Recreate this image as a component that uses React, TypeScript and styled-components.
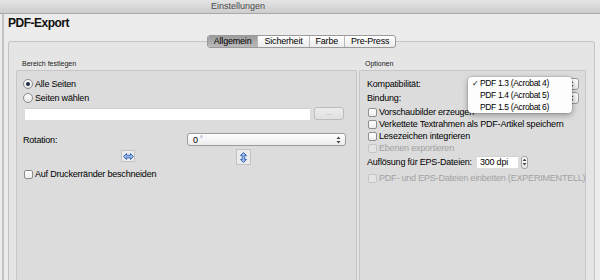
import React from 'react';
import styled, { createGlobalStyle } from 'styled-components';

const GlobalStyle = createGlobalStyle`
  html, body {
    margin: 0;
    padding: 0;
  }
  body {
    width: 600px;
    height: 280px;
    overflow: hidden;
    background: #ececec;
    font-family: "Liberation Sans", Arial, sans-serif;
    font-size: 9px;
    letter-spacing: -0.2px;
    color: #000;
  }
`;

const Window = styled.div`
  width: 600px;
  height: 280px;
  display: flex;
  flex-direction: column;
  overflow: hidden;
`;

const TitleBar = styled.div`
  height: 13px;
  flex: none;
  background: linear-gradient(#e4e4e4, #cdcdcd);
  border-bottom: 1px solid #a8a8a8;
  padding-left: 211px;
  line-height: 13px;
  color: #4a4a4a;
  letter-spacing: 0;
`;

const Body = styled.div`
  flex: 1;
  display: flex;
  flex-direction: column;
  margin-left: 2px;
  border-left: 2px solid #c3c3c3;
  padding: 2px 5px 0 4px;
  min-height: 0;
`;

const Heading = styled.h1`
  margin: 0;
  font-size: 12px;
  line-height: 14px;
  font-weight: bold;
  letter-spacing: -0.5px;
  color: #111;
`;

const TabRow = styled.div`
  display: flex;
  justify-content: center;
  margin-top: 5px;
  position: relative;
  z-index: 1;
`;

const TabGroup = styled.div`
  display: flex;
  border: 1px solid #9a9a9a;
  border-radius: 3px;
  overflow: hidden;
  background: linear-gradient(#ffffff, #ebebeb);
`;

const Tab = styled.div<{ $active?: boolean }>`
  height: 11px;
  line-height: 11px;
  padding: 0 6px;
  border-left: 1px solid ${p => (p.$active ? '#8c8c8c' : '#b8b8b8')};
  background: ${p => (p.$active ? 'linear-gradient(#9c9c9c, #bababa)' : 'transparent')};
  &:first-child {
    border-left: none;
  }
`;

const TabBox = styled.div`
  flex: 1;
  display: flex;
  gap: 2px;
  margin-top: -7px;
  border: 1px solid #c4c4c4;
  border-bottom: none;
  border-radius: 3px 3px 0 0;
  background: #e5e5e5;
  padding: 17px 8px 0 7px;
  min-height: 0;
`;

const Column = styled.div<{ $w: number }>`
  width: ${p => p.$w}px;
  display: flex;
  flex-direction: column;
`;

const GroupLabel = styled.div`
  font-size: 7px;
  line-height: 10px;
  letter-spacing: 0;
  padding-left: 6px;
  margin-bottom: 1px;
  color: #222;
`;

const Panel = styled.div<{ $pl: number }>`
  flex: 1;
  position: relative;
  background: #dcdcdc;
  border: 1px solid #c6c6c6;
  border-bottom: none;
  border-radius: 2px 2px 0 0;
  padding: 6px 0 0 ${p => p.$pl}px;
`;

const Row = styled.div<{ $h?: number; $mt?: number }>`
  display: flex;
  align-items: center;
  gap: 2px;
  height: ${p => p.$h ?? 12}px;
  margin-top: ${p => p.$mt ?? 0}px;
`;

const Label = styled.span<{ $disabled?: boolean; $w?: number }>`
  color: ${p => (p.$disabled ? '#a2a2a2' : '#000')};
  white-space: nowrap;
  ${p => (p.$w ? `width: ${p.$w}px; flex: none;` : '')}
`;

const Radio = styled.span<{ $checked?: boolean }>`
  width: 10px;
  height: 10px;
  box-sizing: border-box;
  flex: none;
  border-radius: 50%;
  border: 1px solid #8a8a8a;
  background: linear-gradient(#ffffff, #e6e6e6);
  display: flex;
  align-items: center;
  justify-content: center;
  &::after {
    content: '';
    width: 4px;
    height: 4px;
    border-radius: 50%;
    background: #1f2c46;
    display: ${p => (p.$checked ? 'block' : 'none')};
  }
`;

const CheckBox = styled.span<{ $disabled?: boolean }>`
  width: 9px;
  height: 9px;
  box-sizing: border-box;
  flex: none;
  margin-left: 1px;
  border: 1px solid ${p => (p.$disabled ? '#c6c6c6' : '#8e8e8e')};
  border-radius: 2px;
  background: ${p => (p.$disabled ? '#e4e4e4' : 'linear-gradient(#ffffff, #ececec)')};
`;

const TextField = styled.div<{ $w: number; $ml?: number }>`
  width: ${p => p.$w}px;
  height: 12px;
  flex: none;
  box-sizing: border-box;
  margin-left: ${p => p.$ml ?? 0}px;
  background: #fff;
  border-top: 1px solid #cfcfcf;
  padding-left: 3px;
  line-height: 11px;
`;

const SmallButton = styled.div`
  width: 30px;
  height: 13px;
  box-sizing: border-box;
  margin-left: 2px;
  border: 1px solid #bcbcbc;
  border-radius: 3px;
  background: linear-gradient(#ececec, #e0e0e0);
  color: #a5a5a5;
  font-size: 7px;
  line-height: 9px;
  text-align: center;
`;

const Select = styled.div<{ $w: number; $h?: number }>`
  width: ${p => p.$w}px;
  height: ${p => p.$h ?? 13}px;
  flex: none;
  box-sizing: border-box;
  display: flex;
  align-items: center;
  justify-content: space-between;
  padding: 0 4px 0 5px;
  border: 1px solid #9b9b9b;
  border-radius: 3px;
  background: linear-gradient(#ffffff, #ececec);
`;

const Degree = styled.span`
  color: #3d5f9a;
  font-size: 7px;
  vertical-align: top;
`;

const Stepper = styled.div`
  width: 7px;
  height: 13px;
  box-sizing: border-box;
  margin-left: 3px;
  border: 1px solid #a2a2a2;
  border-radius: 3px;
  background: linear-gradient(#ffffff, #e8e8e8);
  display: flex;
  align-items: center;
  justify-content: center;
`;

const FlipButton = styled.div<{ $w: number; $h: number; $ml: number; $mt?: number }>`
  width: ${p => p.$w}px;
  height: ${p => p.$h}px;
  box-sizing: border-box;
  margin-left: ${p => p.$ml}px;
  margin-top: ${p => p.$mt ?? 0}px;
  border: 1px solid #c2c2c2;
  background: #ebebeb;
  display: flex;
  align-items: center;
  justify-content: center;
`;

const Menu = styled.div`
  position: absolute;
  left: 108px;
  top: 6px;
  width: 104px;
  background: #fdfdfd;
  border-radius: 4px;
  box-shadow: 0 2px 6px rgba(0, 0, 0, 0.35), 0 0 0 0.5px rgba(0, 0, 0, 0.15);
  z-index: 2;
`;

const MenuItem = styled.div`
  display: flex;
  align-items: center;
  height: 12px;
  font-size: 8.5px;
  letter-spacing: -0.35px;
`;

const Check = styled.span`
  width: 8px;
  margin-left: 4px;
  font-size: 8px;
  flex: none;
`;

const Arrows = () => (
  <svg width="5" height="8" viewBox="0 0 5 8">
    <path d="M0.5 3 L2.5 0.5 L4.5 3 Z M0.5 5 L2.5 7.5 L4.5 5 Z" fill="#4a4a4a" />
  </svg>
);

const FlipIcon = ({ vertical }: { vertical?: boolean }) => (
  <svg width="11" height="7" viewBox="0 0 11 7" style={vertical ? { transform: 'rotate(90deg)' } : undefined}>
    <path
      d="M0.5 3.5 L3.5 0.5 L3.5 2.2 L7.5 2.2 L7.5 0.5 L10.5 3.5 L7.5 6.5 L7.5 4.8 L3.5 4.8 L3.5 6.5 Z"
      fill="#9dbbea"
      stroke="#2d5fb4"
      strokeWidth="0.9"
      strokeLinejoin="round"
    />
  </svg>
);

export default function App() {
  return (
    <>
      <GlobalStyle />
      <Window>
        <TitleBar>Einstellungen</TitleBar>
        <Body>
          <Heading>PDF-Export</Heading>
          <TabRow>
            <TabGroup>
              <Tab $active>Allgemein</Tab>
              <Tab>Sicherheit</Tab>
              <Tab>Farbe</Tab>
              <Tab>Pre-Press</Tab>
            </TabGroup>
          </TabRow>
          <TabBox>
            <Column $w={341}>
              <GroupLabel>Bereich festlegen</GroupLabel>
              <Panel $pl={6}>
                <Row $h={14}>
                  <Radio $checked />
                  <Label>Alle Seiten</Label>
                </Row>
                <Row $h={14}>
                  <Radio />
                  <Label>Seiten wählen</Label>
                </Row>
                <Row $h={13} $mt={2}>
                  <TextField $w={285} $ml={2} />
                  <SmallButton>...</SmallButton>
                </Row>
                <Row $h={13} $mt={13} style={{ gap: 0 }}>
                  <Label $w={164}>Rotation:</Label>
                  <Select $w={159}>
                    <span>
                      0 <Degree>°</Degree>
                    </span>
                    <Arrows />
                  </Select>
                </Row>
                <Row $h={16} $mt={3} style={{ alignItems: 'flex-start', gap: 0 }}>
                  <FlipButton $w={14} $h={12} $ml={98} $mt={1}>
                    <FlipIcon />
                  </FlipButton>
                  <FlipButton $w={15} $h={16} $ml={101}>
                    <FlipIcon vertical />
                  </FlipButton>
                </Row>
                <Row $h={14} $mt={2}>
                  <CheckBox />
                  <Label>Auf Druckerränder beschneiden</Label>
                </Row>
              </Panel>
            </Column>
            <Column $w={227}>
              <GroupLabel>Optionen</GroupLabel>
              <Panel $pl={7}>
                <Row $h={14} style={{ gap: 0 }}>
                  <Label $w={103}>Kompatibilität:</Label>
                  <Select $w={109} $h={12} style={{ justifyContent: 'flex-end' }}>
                    <Arrows />
                  </Select>
                </Row>
                <Row $h={14} style={{ gap: 0 }}>
                  <Label $w={103}>Bindung:</Label>
                  <Select $w={109} $h={12} style={{ justifyContent: 'flex-end' }}>
                    <Arrows />
                  </Select>
                </Row>
                <Row $mt={1}>
                  <CheckBox />
                  <Label>Vorschaubilder erzeugen</Label>
                </Row>
                <Row>
                  <CheckBox />
                  <Label>Verkettete Textrahmen als PDF-Artikel speichern</Label>
                </Row>
                <Row>
                  <CheckBox />
                  <Label>Lesezeichen integrieren</Label>
                </Row>
                <Row>
                  <CheckBox $disabled />
                  <Label $disabled>Ebenen exportieren</Label>
                </Row>
                <Row $h={14} $mt={1} style={{ gap: 0 }}>
                  <Label>Auflösung für EPS-Dateien:</Label>
                  <TextField $w={41} $ml={5}>300 dpi</TextField>
                  <Stepper>
                    <Arrows />
                  </Stepper>
                </Row>
                <Row $mt={3}>
                  <CheckBox $disabled />
                  <Label $disabled>PDF- und EPS-Dateien einbetten (EXPERIMENTELL)</Label>
                </Row>
                <Menu>
                  <MenuItem>
                    <Check>✓</Check>
                    PDF 1.3 (Acrobat 4)
                  </MenuItem>
                  <MenuItem>
                    <Check />
                    PDF 1.4 (Acrobat 5)
                  </MenuItem>
                  <MenuItem>
                    <Check />
                    PDF 1.5 (Acrobat 6)
                  </MenuItem>
                </Menu>
              </Panel>
            </Column>
          </TabBox>
        </Body>
      </Window>
    </>
  );
}
